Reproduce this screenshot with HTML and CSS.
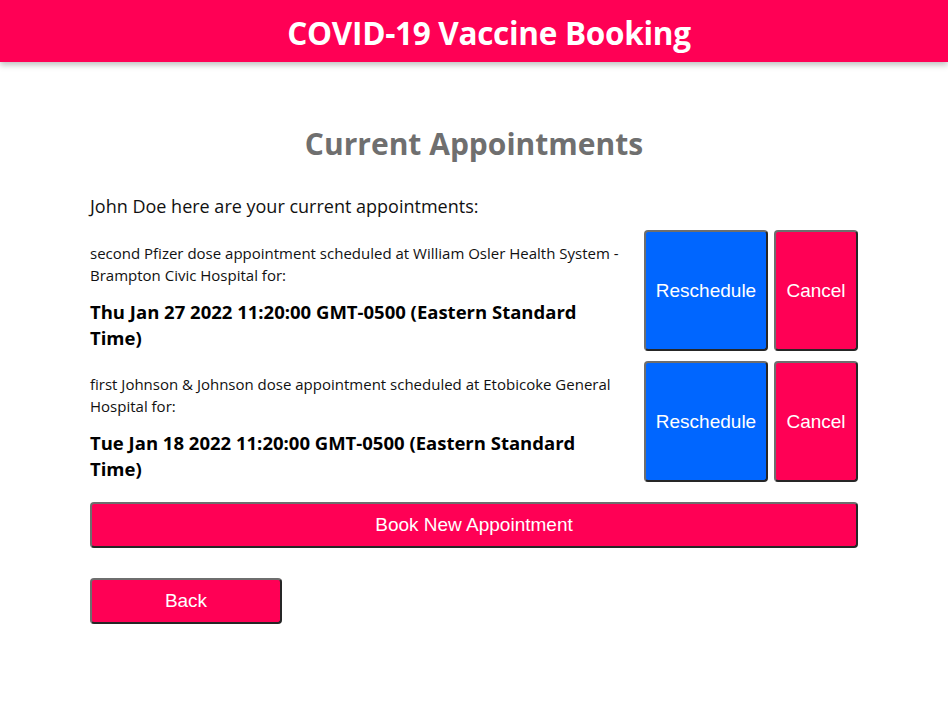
FILE: index.html
```html
<!DOCTYPE html>
<html>
<head>
<meta charset="utf-8">
<link rel="stylesheet" href="styles.css">
</head>
<body>
<header class="topbar"><h1>COVID-19 Vaccine Booking</h1></header>
<main class="page">
  <h2 class="title">Current Appointments</h2>
  <p class="intro">John Doe here are your current appointments:</p>
  <div class="appt">
    <div class="info">
      <p class="desc">second Pfizer dose appointment scheduled at William Osler Health System - Brampton Civic Hospital for:</p>
      <p class="date">Thu Jan 27 2022 11:20:00 GMT-0500 (Eastern Standard Time)</p>
    </div>
    <button class="btn blue resched">Reschedule</button>
    <button class="btn red cancel">Cancel</button>
  </div>
  <div class="appt">
    <div class="info">
      <p class="desc">first Johnson &amp; Johnson dose appointment scheduled at Etobicoke General Hospital for:</p>
      <p class="date">Tue Jan 18 2022 11:20:00 GMT-0500 (Eastern Standard Time)</p>
    </div>
    <button class="btn blue resched">Reschedule</button>
    <button class="btn red cancel">Cancel</button>
  </div>
  <button class="btn red wide">Book New Appointment</button>
  <button class="btn red back">Back</button>
</main>
</body>
</html>
```
FILE: styles.css
```css
body {
  margin: 0;
  font-family: "Open Sans", "Noto Sans", sans-serif;
  background: #fff;
}
.topbar {
  background: #ff0055;
  height: 62px;
  display: flex;
  align-items: center;
  justify-content: center;
  padding-left: 30px;
  box-shadow: 0 3px 6px rgba(0,0,0,0.25);
}
.topbar h1 {
  margin: 2px 0 0;
  color: #fff;
  font-size: 31.5px;
  font-weight: 700;
  letter-spacing: -0.3px;
}
.page {
  width: 768px;
  margin: 0 auto;
  display: flex;
  flex-direction: column;
}
.title {
  margin: 62px 0 0;
  text-align: center;
  color: #6f6f6f;
  font-size: 30px;
  font-weight: 700;
  line-height: 40px;
}
.intro {
  margin: 30px 0 0;
  font-size: 18px;
  line-height: 24px;
  color: #111;
}
.appt {
  display: flex;
  align-items: stretch;
  margin-top: 12px;
  gap: 6px;
}
.appt + .appt { margin-top: 10px; }
.info { flex: 1; padding-right: 8px; }
.desc {
  margin: 12px 0 0;
  font-size: 15px;
  line-height: 22px;
  color: #111;
}
.date {
  margin: 13px 0 0;
  font-size: 18.5px;
  font-weight: 700;
  line-height: 26px;
  color: #000;
}
.btn {
  font-family: "Liberation Sans", Arial, sans-serif;
  font-size: 19px;
  color: #fff;
  border: 2px solid;
  border-color: #6e6e6e #262626 #262626 #6e6e6e;
  border-radius: 4px;
  padding: 0;
  cursor: pointer;
}
.blue { background: #0066ff; }
.red { background: #ff0055; }
.resched { width: 124px; height: 121px; }
.cancel { width: 84px; height: 121px; }
.wide { height: 46px; margin-top: 20px; width: 100%; }
.back { height: 46px; width: 192px; margin-top: 30px; }
```
